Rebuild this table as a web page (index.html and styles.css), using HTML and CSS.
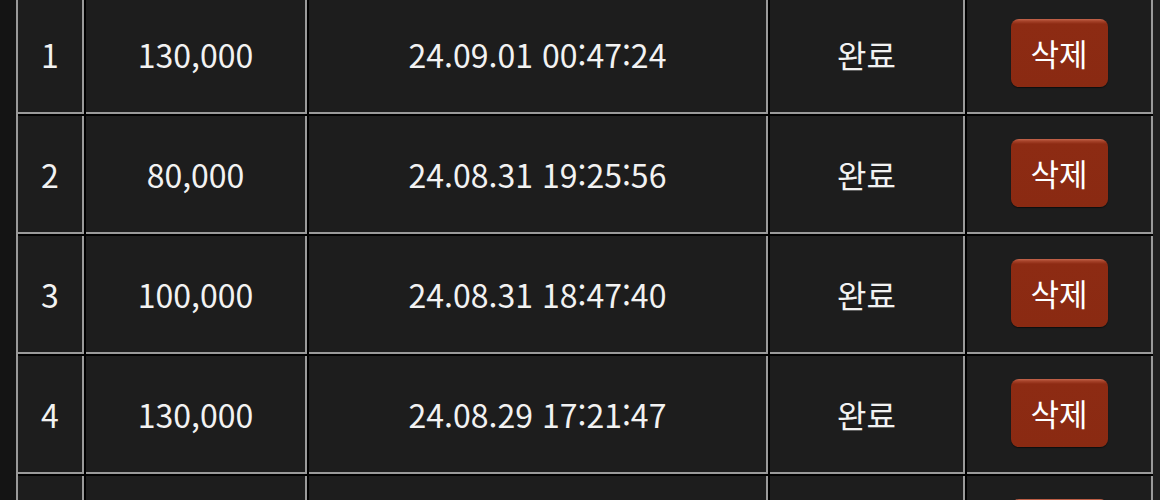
FILE: index.html
```html
<!DOCTYPE html>
<html lang="ko">
<head>
<meta charset="utf-8">
<link rel="stylesheet" href="styles.css">
</head>
<body>
<div class="page">
  <div class="list">
    <div class="row">
      <div class="cell">1</div>
      <div class="cell">130,000</div>
      <div class="cell">24.09.01 00:47:24</div>
      <div class="cell">완료</div>
      <div class="cell"><button class="del">삭제</button></div>
    </div>
    <div class="row">
      <div class="cell">2</div>
      <div class="cell">80,000</div>
      <div class="cell">24.08.31 19:25:56</div>
      <div class="cell">완료</div>
      <div class="cell"><button class="del">삭제</button></div>
    </div>
    <div class="row">
      <div class="cell">3</div>
      <div class="cell">100,000</div>
      <div class="cell">24.08.31 18:47:40</div>
      <div class="cell">완료</div>
      <div class="cell"><button class="del">삭제</button></div>
    </div>
    <div class="row">
      <div class="cell">4</div>
      <div class="cell">130,000</div>
      <div class="cell">24.08.29 17:21:47</div>
      <div class="cell">완료</div>
      <div class="cell"><button class="del">삭제</button></div>
    </div>
    <div class="row">
      <div class="cell">5</div>
      <div class="cell">100,000</div>
      <div class="cell">24.08.28 12:10:05</div>
      <div class="cell">완료</div>
      <div class="cell"><button class="del">삭제</button></div>
    </div>
  </div>
</div>
</body>
</html>
```

FILE: styles.css
```css
html, body {
  margin: 0;
  padding: 0;
  height: 100%;
  overflow: hidden;
}
body {
  background: #1f1f1f;
  font-family: "Noto Sans CJK KR", "Noto Sans", sans-serif;
  color: #f2f2f2;
}
.page {
  display: flex;
  align-items: flex-start;
}
.list {
  padding-left: 16px;
  background: #141414;
  margin-top: -4px;
  display: flex;
  flex-direction: column;
}
.row {
  flex-shrink: 0;
  display: grid;
  grid-template-columns: 66px 221px 459px 195px 186px;
  column-gap: 2px;
  background: #000;
  border-left: 2px solid #9a9a9a;
  padding-bottom: 2px;
  height: 118px;
}
.cell {
  background: #1d1d1d;
  border-right: 2px solid #9a9a9a;
  border-bottom: 2px solid #9a9a9a;
  display: flex;
  align-items: center;
  justify-content: center;
  font-size: 32px;
  line-height: 1;
}
.del {
  width: 97px;
  height: 68px;
  border: none;
  border-radius: 8px;
  background: linear-gradient(#c4664e 0, #a8442b 2px, #8d2b13 5px, #8a2a12 100%);
  box-shadow: 0 1px 1px rgba(0,0,0,0.5);
  color: #fff;
  font-family: "Noto Sans CJK KR", sans-serif;
  font-size: 31px;
  line-height: 1;
  padding: 0 0 2px;
  margin-top: -2px;
}
```
